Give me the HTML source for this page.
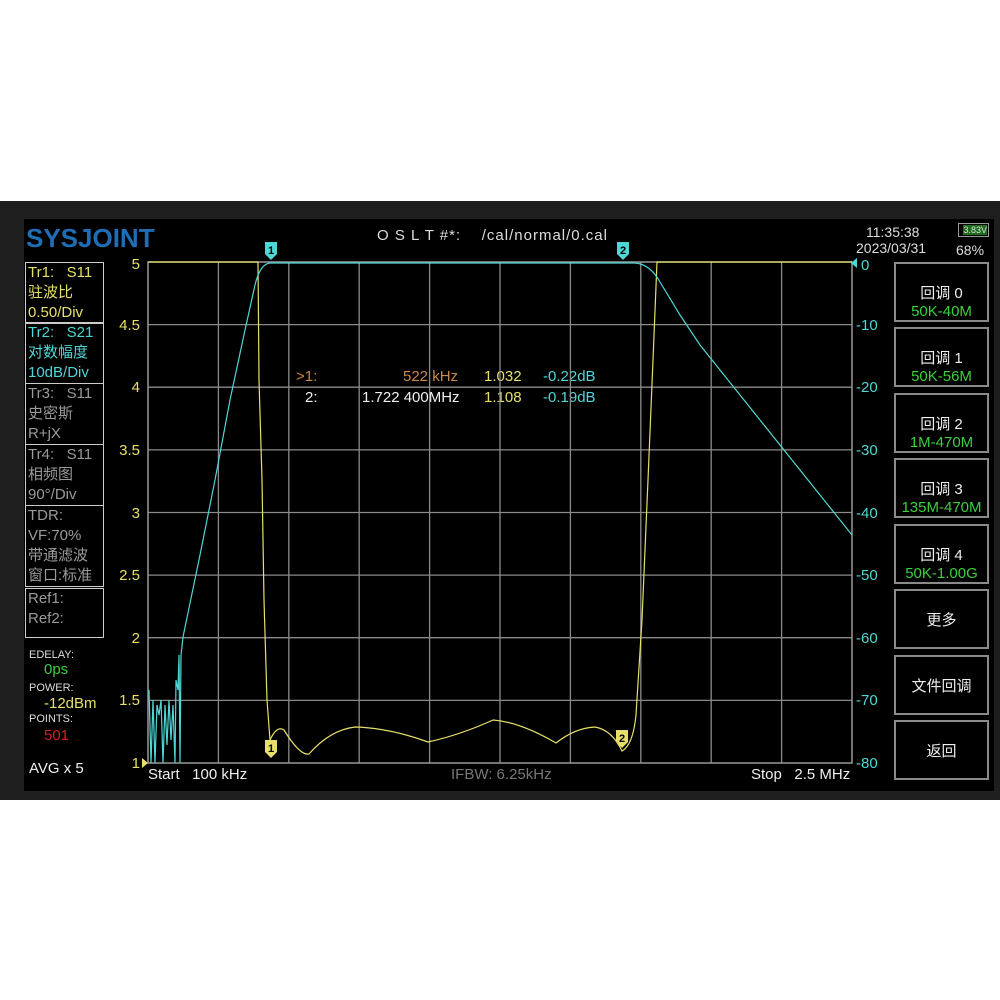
<!DOCTYPE html>
<html><head><meta charset="utf-8"><style>
body{margin:0;width:1000px;height:1000px;background:#fff;position:relative;overflow:hidden;font-family:"Liberation Sans","Noto Sans CJK SC",sans-serif}
.a{position:absolute;white-space:nowrap}
.frame{position:absolute;left:0;top:201px;width:1000px;height:599px;background:#1e1e1e}
.scr{position:absolute;left:24px;top:219px;width:970px;height:572px;background:#000}
.box{position:absolute;left:25px;width:79px;border:1px solid #ccc;box-sizing:border-box}
.box div{height:20px;line-height:20px;font-size:15px;padding-left:2px}
.btn{position:absolute;left:894px;width:95px;height:60px;border:2px solid #8a8a8a;box-sizing:border-box;text-align:center;color:#eee;font-size:15px}
.y{color:#e6e06a}.c{color:#4fd6d6}.g{color:#9a9a9a}.gr{color:#3ccf3c}
</style></head><body>
<div class="frame"></div><div class="scr"></div>
<div class="a" style="left:26px;top:223px;font-size:26px;font-weight:bold;color:#1f6db5">SYSJOINT</div>
<div class="a" style="left:377px;top:227px;font-size:15px;color:#ddd;letter-spacing:1px">O S L T #*: &nbsp;&nbsp; /cal/normal/0.cal</div>
<div class="a" style="left:866px;top:224px;font-size:14px;color:#ddd">11:35:38</div>
<div class="a" style="left:856px;top:240px;font-size:14px;color:#ddd">2023/03/31</div>
<div class="a" style="left:956px;top:242px;font-size:14px;color:#ddd">68%</div>
<div class="a" style="left:958px;top:223px;width:28px;height:12px;border:1px solid #999;font-size:9px;color:#ddd;line-height:12px;text-align:right;padding-right:1px"><span style="background:#1d6d1d">3.83V</span></div>

<div class="box" style="top:262px"><div class="y">Tr1: &nbsp; S11</div><div class="y">驻波比</div><div class="y">0.50/Div</div></div>
<div class="box" style="top:322px"><div class="c">Tr2: &nbsp; S21</div><div class="c">对数幅度</div><div class="c">10dB/Div</div></div>
<div class="box" style="top:383px"><div class="g">Tr3: &nbsp; S11</div><div class="g">史密斯</div><div class="g">R+jX</div></div>
<div class="box" style="top:444px"><div class="g">Tr4: &nbsp; S11</div><div class="g">相频图</div><div class="g">90°/Div</div></div>
<div class="box" style="top:505px"><div class="g">TDR:</div><div class="g">VF:70%</div><div class="g">带通滤波</div><div class="g">窗口:标准</div></div>
<div class="box" style="top:588px;height:50px"><div class="g">Ref1:</div><div class="g">Ref2:</div></div>
<div class="a" style="left:29px;top:649px;font-size:11px;color:#ddd">EDELAY:</div>
<div class="a" style="left:44px;top:661px;font-size:15px" ><span class="gr">0ps</span></div>
<div class="a" style="left:29px;top:682px;font-size:11px;color:#ddd">POWER:</div>
<div class="a" style="left:44px;top:695px;font-size:15px;color:#e6e06a">-12dBm</div>
<div class="a" style="left:29px;top:713px;font-size:11px;color:#ddd">POINTS:</div>
<div class="a" style="left:44px;top:727px;font-size:15px;color:#d02020">501</div>
<div class="a" style="left:29px;top:760px;font-size:15px;color:#eee">AVG x 5</div>

<div class="a" style="left:148px;top:766px;font-size:15px;color:#eee">Start &nbsp; 100 kHz</div>
<div class="a" style="left:451px;top:766px;font-size:15px;color:#777">IFBW: 6.25kHz</div>
<div class="a" style="left:751px;top:766px;font-size:15px;color:#eee">Stop &nbsp; 2.5 MHz</div>

<div class="a" style="left:296px;top:368px;font-size:15px;color:#c98a4a">&gt;1:</div>
<div class="a" style="left:403px;top:368px;font-size:15px;color:#c98a4a">522 kHz</div>
<div class="a" style="left:484px;top:368px;font-size:15px;color:#e6e06a">1.032</div>
<div class="a" style="left:543px;top:368px;font-size:15px;color:#4fd6d6">-0.22dB</div>
<div class="a" style="left:305px;top:389px;font-size:15px;color:#eee">2:</div>
<div class="a" style="left:362px;top:389px;font-size:15px;color:#eee">1.722 400MHz</div>
<div class="a" style="left:484px;top:389px;font-size:15px;color:#e6e06a">1.108</div>
<div class="a" style="left:543px;top:389px;font-size:15px;color:#4fd6d6">-0.19dB</div>

<svg class="a" style="left:0;top:0" width="1000" height="1000">
<g stroke="#8a8a8a" stroke-width="1.3">
<line x1="218.4" y1="262" x2="218.4" y2="763"/><line x1="288.8" y1="262" x2="288.8" y2="763"/><line x1="359.2" y1="262" x2="359.2" y2="763"/><line x1="429.6" y1="262" x2="429.6" y2="763"/><line x1="500" y1="262" x2="500" y2="763"/><line x1="570.4" y1="262" x2="570.4" y2="763"/><line x1="640.8" y1="262" x2="640.8" y2="763"/><line x1="711.2" y1="262" x2="711.2" y2="763"/><line x1="781.6" y1="262" x2="781.6" y2="763"/>
<line x1="148" y1="324.6" x2="852" y2="324.6"/><line x1="148" y1="387.2" x2="852" y2="387.2"/><line x1="148" y1="449.9" x2="852" y2="449.9"/><line x1="148" y1="512.5" x2="852" y2="512.5"/><line x1="148" y1="575.1" x2="852" y2="575.1"/><line x1="148" y1="637.7" x2="852" y2="637.7"/><line x1="148" y1="700.4" x2="852" y2="700.4"/>
</g>
<rect x="148" y="262" width="704" height="501" fill="none" stroke="#999" stroke-width="1.5"/>
<g font-size="15" font-family="Liberation Sans,sans-serif" fill="#e6e06a" text-anchor="end">
<text x="140" y="269">5</text><text x="140" y="330">4.5</text><text x="140" y="392">4</text><text x="140" y="455">3.5</text><text x="140" y="518">3</text><text x="140" y="580">2.5</text><text x="140" y="643">2</text><text x="140" y="705">1.5</text><text x="140" y="768">1</text>
</g>
<g font-size="15" font-family="Liberation Sans,sans-serif" fill="#4fd6d6">
<text x="861" y="270">0</text><text x="856" y="330">-10</text><text x="856" y="392">-20</text><text x="856" y="455">-30</text><text x="856" y="518">-40</text><text x="856" y="580">-50</text><text x="856" y="643">-60</text><text x="856" y="705">-70</text><text x="856" y="768">-80</text>
</g>
<polygon points="857,258 857,268 851,263" fill="#4fd6d6"/>
<polygon points="142,758 142,768 148,763" fill="#e6e06a"/>
<path d="M148,262 L258,262 L259,380 L262,480 L264,600 L267,700 L270,740 Q277,725 284,730 Q300,756 309,754 Q330,730 355,727 Q390,728 428,742 Q460,735 493,720 Q520,722 556,743 Q575,728 595,727 Q612,730 622,751 Q633,745 636,715 L642,620 L648,480 L653,360 L657,262 L852,262" fill="none" stroke="#e6e06a" stroke-width="1.2"/>
<path d="M149,690 L151,763 L153,700 L155,763 L157,705 L159,715 L161,700 L163,763 L165,705 L167,745 L169,700 L171,740 L173,705 L175,763 L176,680 L178,690 L179,655 L180,763 L181,655 L183,637 L200,555 L215,480 L230,400 L245,330 L255,285 Q260,264 270,263 L635,263 Q650,264 660,282 L680,315 L700,345 L852,535" fill="none" stroke="#4fd6d6" stroke-width="1.2"/>
<g font-size="11" font-family="Liberation Sans,sans-serif" font-weight="bold" text-anchor="middle">
<path d="M265,242 h12 v12 l-6,6 l-6,-6z" fill="#4fd6d6"/><text x="271" y="254" fill="#000">1</text>
<path d="M617,242 h12 v12 l-6,6 l-6,-6z" fill="#4fd6d6"/><text x="623" y="254" fill="#000">2</text>
<path d="M265,740 h12 v12 l-6,6 l-6,-6z" fill="#e6e06a"/><text x="271" y="752" fill="#000">1</text>
<path d="M616,730 h12 v12 l-6,6 l-6,-6z" fill="#e6e06a"/><text x="622" y="742" fill="#000">2</text>
</g>
</svg>

<div class="btn" style="top:262px"><div style="margin-top:18px">回调 0</div><div class="gr">50K-40M</div></div>
<div class="btn" style="top:327px"><div style="margin-top:18px">回调 1</div><div class="gr">50K-56M</div></div>
<div class="btn" style="top:393px"><div style="margin-top:18px">回调 2</div><div class="gr">1M-470M</div></div>
<div class="btn" style="top:458px"><div style="margin-top:18px">回调 3</div><div class="gr">135M-470M</div></div>
<div class="btn" style="top:524px"><div style="margin-top:18px">回调 4</div><div class="gr">50K-1.00G</div></div>
<div class="btn" style="top:589px"><div style="margin-top:18px">更多</div></div>
<div class="btn" style="top:655px"><div style="margin-top:18px">文件回调</div></div>
<div class="btn" style="top:720px"><div style="margin-top:18px">返回</div></div>
</body></html>
